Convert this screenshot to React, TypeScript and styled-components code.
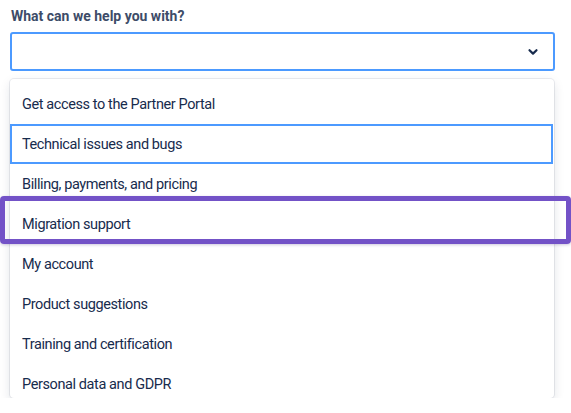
import * as React from 'react'
import styled, { createGlobalStyle } from 'styled-components'

const GlobalStyle = createGlobalStyle`
  body {
    margin: 0;
    background: #fff;
    font-family: Roboto, "Liberation Sans", Arial, sans-serif;
    color: #172b4d;
  }
`

const Page = styled.div`
  padding: 6px 16px 0 10px;
  width: 571px;
  box-sizing: border-box;
`

const Label = styled.label`
  display: block;
  font-size: 14px;
  font-weight: 700;
  line-height: 20px;
  color: #3d4c68;
  padding-left: 1px;
  margin-bottom: 6px;
`

const Control = styled.div`
  box-sizing: border-box;
  width: 545px;
  height: 39px;
  border: 2px solid #4c9aff;
  border-radius: 3px;
  display: flex;
  align-items: center;
  justify-content: flex-end;
  padding-right: 14px;
`

const MenuWrap = styled.div`
  position: relative;
  margin-top: 8px;
  width: 544px;
`

const Menu = styled.ul`
  list-style: none;
  margin: 0;
  padding: 5px 0 0;
  height: 319px;
  overflow: hidden;
  box-sizing: border-box;
  border-radius: 4px;
  background: #fff;
  box-shadow: 0 0 0 1px rgba(9, 30, 66, 0.08), 0 4px 11px rgba(9, 30, 66, 0.12);
`

const Option = styled.li<{ focused?: boolean }>`
  box-sizing: border-box;
  height: 40px;
  display: flex;
  align-items: center;
  padding-left: 10px;
  margin-right: 1px;
  font-size: 14.5px;
  letter-spacing: -0.4px;
  color: #172b4d;
  border: 2px solid ${p => (p.focused ? '#4c9aff' : 'transparent')};
`

const Highlight = styled.div`
  position: absolute;
  top: 117px;
  left: -10px;
  width: 571px;
  height: 48px;
  box-sizing: border-box;
  border: 5px solid #7352c7;
  border-radius: 4px;
  box-shadow: 0 1px 3px rgba(60, 40, 120, 0.25);
  pointer-events: none;
`

const options = [
  'Get access to the Partner Portal',
  'Technical issues and bugs',
  'Billing, payments, and pricing',
  'Migration support',
  'My account',
  'Product suggestions',
  'Training and certification',
  'Personal data and GDPR',
]

function Chevron () {
  return (
    <svg width="12" height="12" viewBox="0 0 12 12">
      <path d="M2.5 4.2 L6 7.6 L9.5 4.2" fill="none" stroke="#172b4d" strokeWidth="2.2" strokeLinecap="round" strokeLinejoin="round" />
    </svg>
  )
}

export default function App () {
  return (
    <Page>
      <GlobalStyle />
      <Label>What can we help you with?</Label>
      <Control>
        <Chevron />
      </Control>
      <MenuWrap>
        <Menu>
          {options.map((o, i) => (
            <Option key={o} focused={i === 1}>{o}</Option>
          ))}
        </Menu>
        <Highlight />
      </MenuWrap>
    </Page>
  )
}
